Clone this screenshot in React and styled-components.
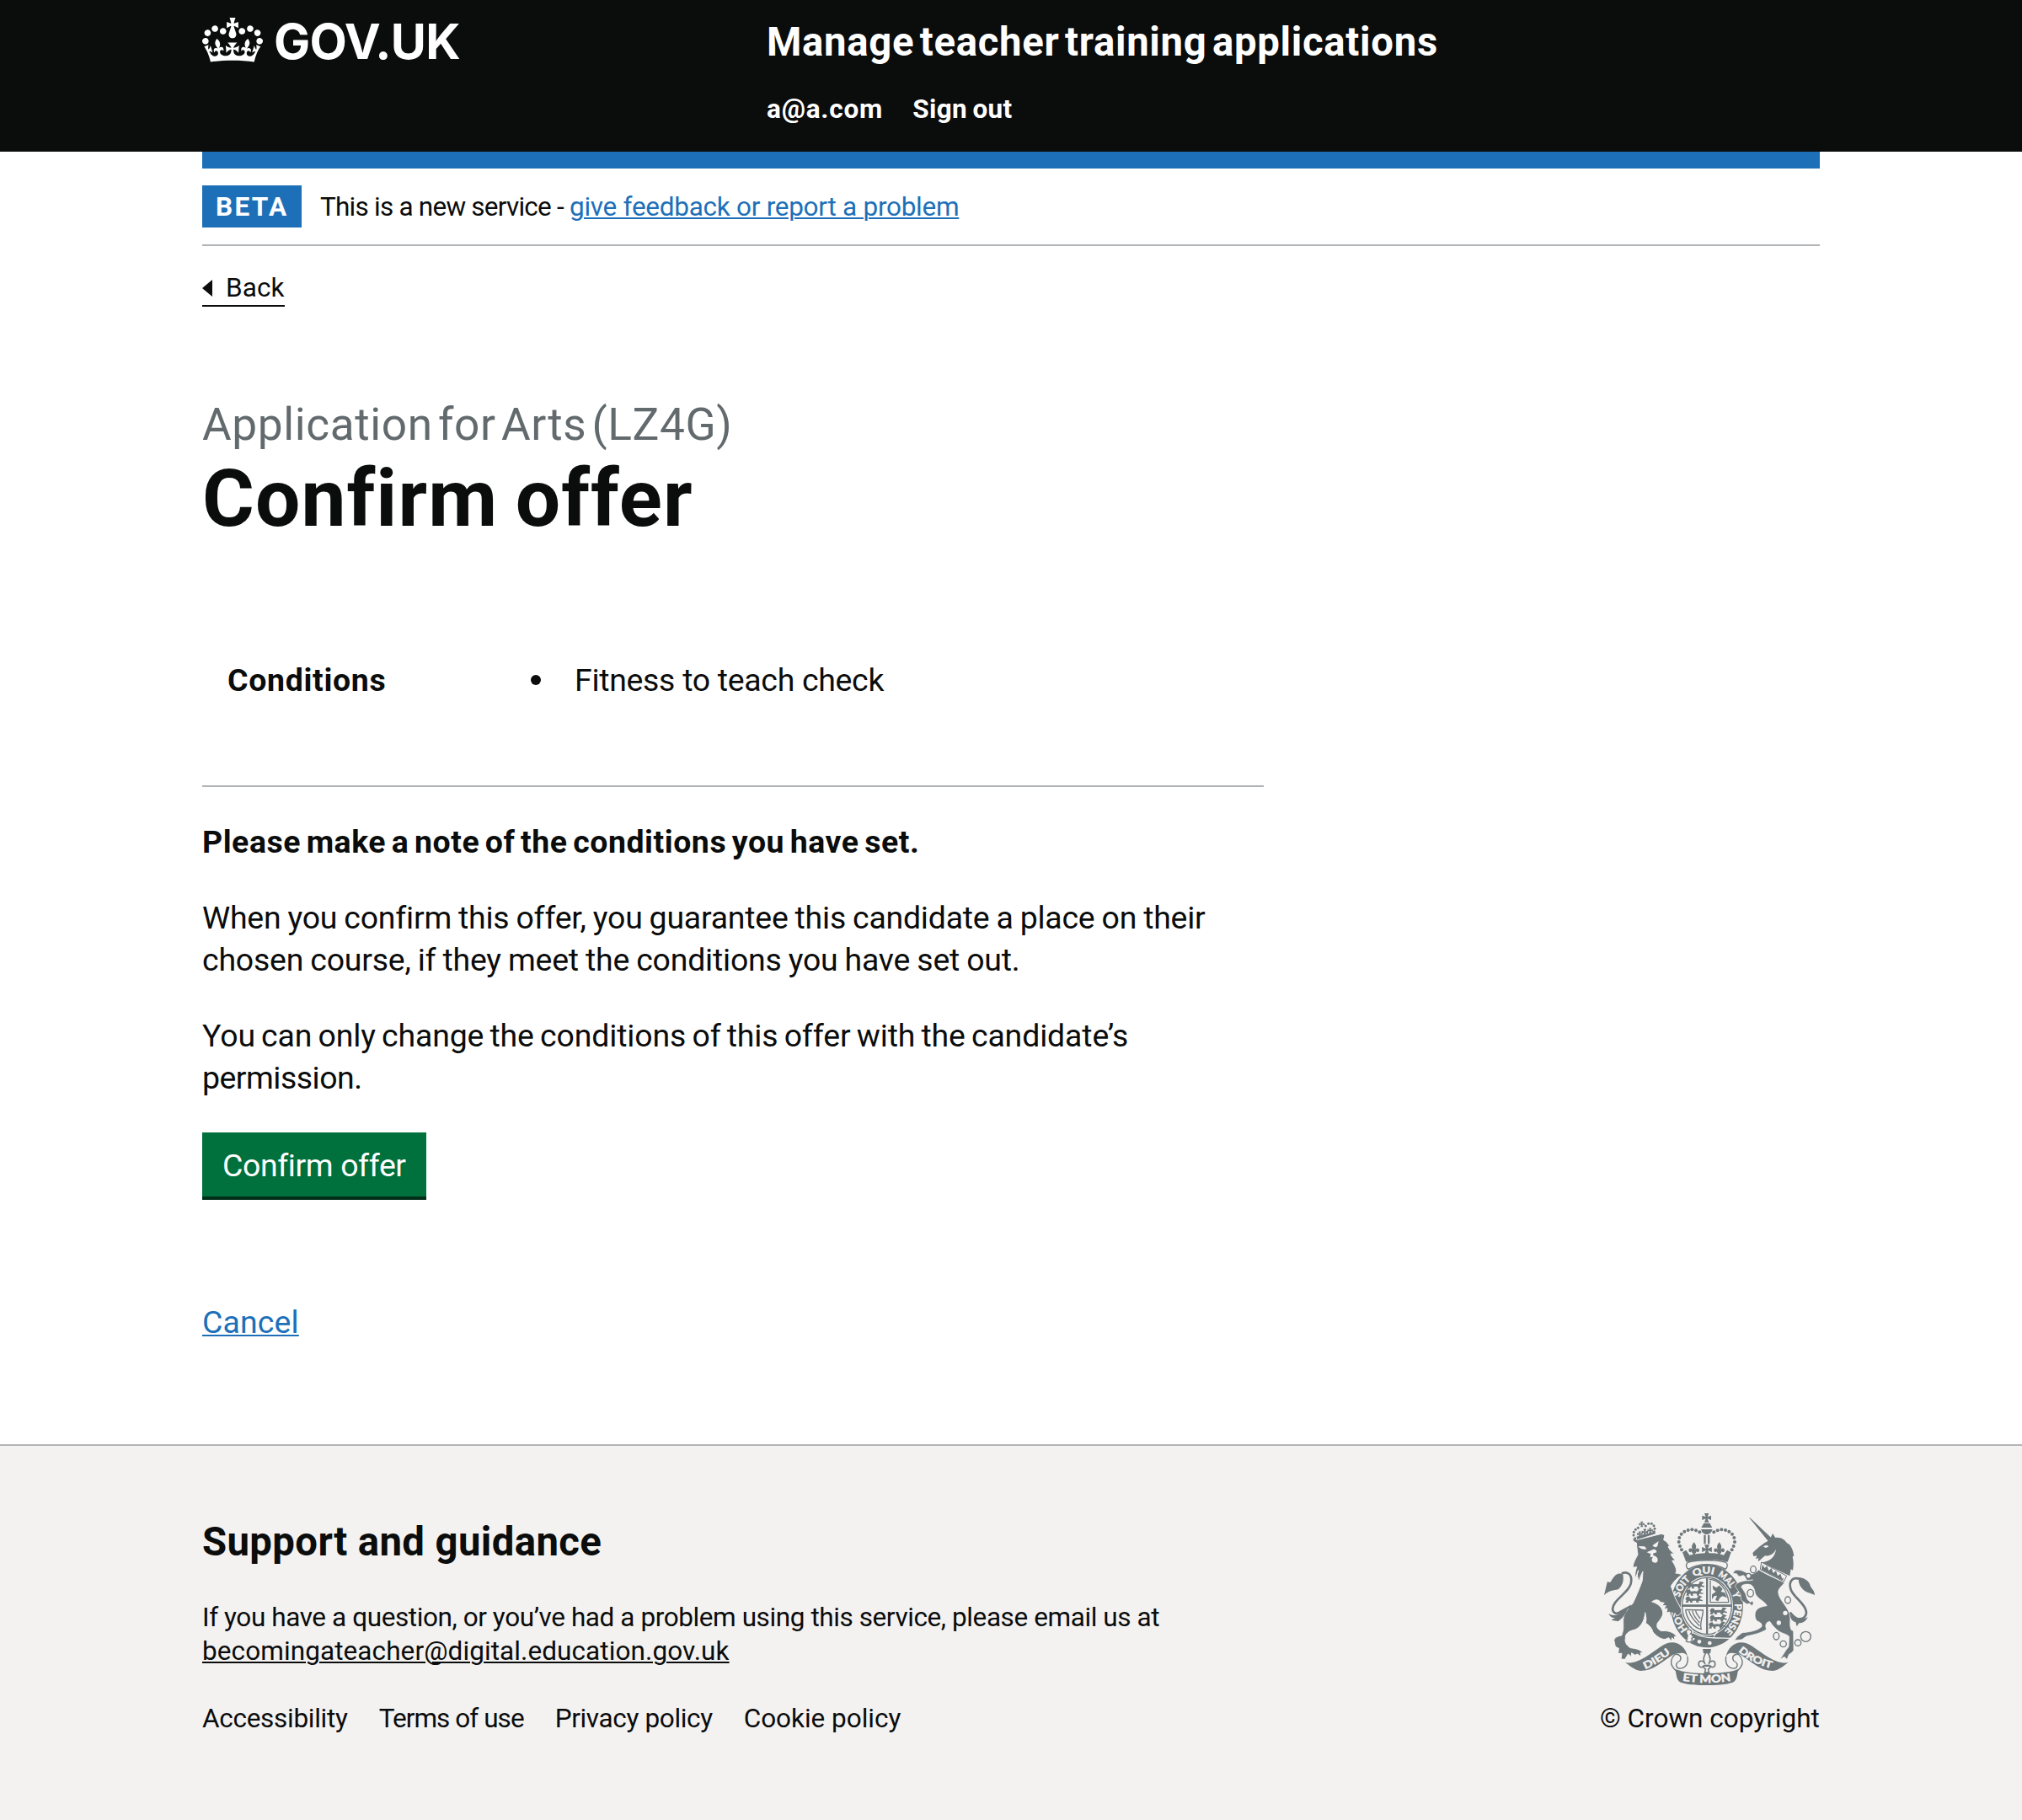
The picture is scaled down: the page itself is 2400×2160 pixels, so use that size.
import React from "react";
import styled, { createGlobalStyle } from "styled-components";

const ink = "#0b0c0c";
const blue = "#1d70b8";
const rule = "#b1b4b6";
const panel = "#f3f2f1";
const crestGrey = "#6e777a";

const GlobalStyle = createGlobalStyle`
  body {
    margin: 0;
    background: #fff;
    color: ${ink};
    font-family: Roboto, "Liberation Sans", sans-serif;
    font-variant-ligatures: none;
  }
`;

const Page = styled.div`
  min-height: 2160px;
  display: flex;
  flex-direction: column;
`;

const Container = styled.div`
  width: 1920px;
  margin: 0 auto;
`;

const Text = styled.span`
  font-size: ${(p) => p.$size || 31.5}px;
  line-height: ${(p) => p.$line || 40}px;
  font-weight: ${(p) => (p.$bold ? 700 : 400)};
  letter-spacing: ${(p) => p.$track || 0}px;
  word-spacing: ${(p) => p.$words || 0}px;
  white-space: nowrap;
`;

const Header = styled.header`
  height: 180px;
  background: ${ink};
  color: #fff;
`;

const HeaderRow = styled(Container)`
  display: grid;
  grid-template-columns: 670px 1fr;
`;

const Logo = styled.a`
  display: flex;
  align-items: flex-start;
  padding-top: 19px;
  color: #fff;
`;

const Crown = styled.svg`
  width: 72px;
  height: 53px;
  margin-top: 2px;
  fill: currentColor;
`;

const LogoText = styled.span`
  margin-left: 13px;
  font: 700 57.6px/60px Inter, "Liberation Sans", sans-serif;
  letter-spacing: -0.8px;
`;

const HeaderContent = styled.div`
  display: flex;
  flex-direction: column;
  padding-top: 25px;
`;

const HeaderNav = styled.nav`
  display: flex;
  gap: 35px;
  margin-top: 35px;
`;

const BlueBar = styled(Container)`
  height: 20px;
  background: ${blue};
`;

const PhaseBanner = styled(Container)`
  display: flex;
  align-items: center;
  box-sizing: border-box;
  height: 92px;
  border-bottom: 2px solid ${rule};
`;

const Tag = styled.strong`
  box-sizing: border-box;
  width: 118px;
  height: 50px;
  padding: 1px 0 0 16px;
  margin-right: 22px;
  background: ${blue};
  color: #fff;
  font-size: 31.5px;
  line-height: 49px;
  letter-spacing: 2.3px;
`;

const PhaseText = styled(Text)`
  padding-top: 2px;
`;

const Link = styled.a`
  color: ${(p) => p.$color || blue};
  text-decoration: underline;
  text-decoration-thickness: 2px;
  text-underline-offset: 2px;
  letter-spacing: ${(p) => p.$track || 0}px;
`;

const BackLink = styled.a`
  display: flex;
  align-items: center;
  gap: 16px;
  box-sizing: border-box;
  width: 98px;
  height: 42px;
  margin-top: 30px;
  border-bottom: 2px solid ${ink};

  &::before {
    content: "";
    border: solid transparent;
    border-width: 10px 12px 10px 0;
    border-right-color: ${ink};
  }
`;

const Main = styled.main`
  width: 1260px;
  padding-top: 110px;
  padding-bottom: 120px;
`;

const Caption = styled.span`
  display: block;
  color: #626a6e;
  font-size: 53.2px;
  line-height: 60px;
  letter-spacing: 0.6px;
  word-spacing: -7.5px;
`;

const Title = styled.h1`
  margin: 8px 0 140px;
  font-size: 94.6px;
  line-height: 100px;
  letter-spacing: 1.05px;
  word-spacing: -4px;
`;

const Summary = styled.dl`
  display: grid;
  grid-template-columns: 360px 1fr;
  margin: 0;
  padding: 0 0 100px 30px;
  border-bottom: 2px solid ${rule};
`;

const Value = styled.dd`
  display: flex;
  align-items: center;
  gap: 40px;
  margin: 0;

  &::before {
    content: "";
    width: 12px;
    height: 12px;
    border-radius: 50%;
    background: ${ink};
  }
`;

const Paragraph = styled.p`
  margin: 40px 0;
  font-size: 37.43px;
  line-height: 50px;
  font-weight: ${(p) => (p.$bold ? 700 : 400)};
`;

const Line = styled.span`
  display: block;
  white-space: nowrap;
  letter-spacing: ${(p) => p.$track}px;
  word-spacing: ${(p) => p.$words || 0}px;
`;

const Button = styled.button`
  display: block;
  width: 266px;
  height: 80px;
  padding: 14px 0 16px 24px;
  margin: 0 0 120px;
  border: 0;
  border-bottom: 4px solid #002d18;
  background: #00703c;
  color: #fff;
  text-align: left;
  font: 400 37.43px/50px Roboto, "Liberation Sans", sans-serif;
  letter-spacing: -0.39px;
`;

const CancelRow = styled.div`
  font-size: 37.43px;
  line-height: 50px;
`;

const Footer = styled.footer`
  flex: 1;
  border-top: 2px solid ${rule};
  background: ${panel};
`;

const FooterRow = styled(Container)`
  display: flex;
  justify-content: space-between;
`;

const FooterInfo = styled.div`
  padding-top: 84px;
`;

const FooterTitle = styled.h2`
  margin: 0 0 40px;
  font-size: 47.3px;
  line-height: 60px;
  letter-spacing: 0.38px;
`;

const FooterText = styled.p`
  margin: 0 0 40px;
  font-size: 31.5px;
  line-height: 40px;
`;

const FooterLinks = styled.nav`
  display: flex;
  gap: 37px;
`;

const Copyright = styled.div`
  display: flex;
  flex-direction: column;
  width: 261px;
  padding-top: 80px;
`;

const CrestArt = styled.svg`
  width: 250px;
  height: 204px;
  margin: 0 0 20px 5px;
`;

const CrownLogo = () => (
  <Crown viewBox="0 0 132 97" aria-hidden="true">
    <path
      fillRule="evenodd"
      d="M25 30.2c3.5 1.5 7.7-.2 9.1-3.7 1.5-3.6-.2-7.8-3.9-9.2-3.6-1.4-7.6.3-9.1 3.9-1.4 3.5.3 7.5 3.9 9zM9 39.5c3.6 1.5 7.8-.2 9.2-3.7 1.5-3.6-.2-7.8-3.9-9.1-3.6-1.5-7.6.2-9.1 3.8-1.4 3.5.3 7.5 3.8 9zM4.4 57.2c3.5 1.5 7.7-.2 9.1-3.8 1.5-3.6-.2-7.7-3.9-9.1-3.5-1.5-7.6.3-9.1 3.8-1.4 3.5.3 7.6 3.9 9.1zm38.3-21.4c3.5 1.5 7.7-.2 9.1-3.8 1.5-3.6-.2-7.7-3.9-9.1-3.6-1.5-7.6.3-9.1 3.8-1.3 3.6.4 7.7 3.9 9.1zm64.4-5.6c-3.6 1.5-7.8-.2-9.1-3.7-1.5-3.6.2-7.8 3.8-9.2 3.6-1.4 7.7.3 9.2 3.9 1.3 3.5-.4 7.5-3.9 9zm15.9 9.3c-3.6 1.5-7.7-.2-9.1-3.7-1.5-3.6.2-7.8 3.7-9.1 3.6-1.5 7.7.2 9.2 3.8 1.5 3.5-.3 7.5-3.8 9zm4.7 17.7c-3.6 1.5-7.8-.2-9.2-3.8-1.5-3.6.2-7.7 3.9-9.1 3.6-1.5 7.7.3 9.2 3.8 1.3 3.5-.4 7.6-3.9 9.1zM89.3 35.8c-3.6 1.5-7.8-.2-9.2-3.8-1.4-3.6.2-7.7 3.9-9.1 3.6-1.5 7.7.3 9.2 3.8 1.4 3.6-.3 7.7-3.9 9.1zM69.7 17.7l8.9 4.7V9.3l-8.9 2.8c-.2-.3-.5-.6-.9-.9L72.4 0H59.6l3.5 11.2c-.3.3-.6.5-.9.9l-8.8-2.8v13.1l8.8-4.7c.3.3.6.7.9.9l-5 15.4v.1c-.2.8-.4 1.6-.4 2.4 0 4.1 3.1 7.5 7 8.1h.2c.3 0 .7.1 1 .1.4 0 .7 0 1-.1h.2c4-.6 7.1-4.1 7.1-8.1 0-.8-.1-1.7-.4-2.4V34l-5.1-15.4c.4-.2.7-.6 1-.9zM66 92.8c16.9 0 32.8 1.1 47.1 3.2 4-16.9 8.9-26.7 14-33.5l-9.6-3.4c1 4.9 1.1 7.2 0 10.2-1.5-1.4-3-4.3-4.2-8.7L108.6 76c2.8-2 5-3.2 7.5-3.3-4.4 9.4-10 11.9-13.6 11.2-4.3-.8-6.3-4.6-5.6-7.9 1-4.7 5.7-5.9 8-.5 4.3-8.7-3-11.4-7.6-8.8 7.1-7.2 7.9-13.5 2.1-21.1-8 6.1-8.1 12.3-4.5 20.8-4.7-5.4-12.1-2.5-9.5 6.2 3.4-5.2 7.9-2 7.2 3.1-.6 4.3-6.4 7.8-13.5 7.2-10.3-.9-10.9-8-11.2-13.8 2.5-.5 7.1 1.8 11 7.3L80.2 60c-4.1 4.4-8 5.3-12.3 5.4 1.4-4.4 8-11.6 8-11.6H55.5s6.4 7.2 7.9 11.6c-4.2-.1-8-1-12.3-5.4l1.4 16.4c3.9-5.5 8.5-7.7 10.9-7.3-.3 5.8-.9 12.8-11.1 13.8-7.2.6-12.9-2.9-13.5-7.2-.7-5 3.8-8.3 7.1-3.1 2.7-8.7-4.6-11.6-9.4-6.2 3.7-8.5 3.6-14.7-4.6-20.8-5.8 7.6-5 13.9 2.2 21.1-4.7-2.6-11.9.1-7.7 8.8 2.3-5.5 7.1-4.2 8.1.5.7 3.3-1.3 7.1-5.7 7.9-3.5.7-9-1.8-13.5-11.2 2.5.1 4.7 1.3 7.5 3.3l-4.7-15.4c-1.2 4.4-2.7 7.2-4.3 8.7-1.1-3-.9-5.3 0-10.2l-9.5 3.4c5 6.9 9.9 16.7 14 33.5 14.8-2.1 30.8-3.2 47.7-3.2z"
    />
  </Crown>
);

const crownDots = [
  [382, 100], [369, 94], [355, 91], [341, 93], [328, 98], [317, 107], [310, 120], [308, 135], [312, 150], [318, 163],
];
const lionCrownDots = [
  [152, 122], [147, 111], [148, 100], [154, 91], [163, 85], [190, 78], [200, 70], [211, 70], [219, 77], [222, 88], [220, 98],
];

const motto = [
  ["honi", "HO", "M340 446A99 115 0 0 1 311 391", 56],
  ["soit", "SOIT", "M311 332A99 115 0 0 1 353 268", 74],
  ["qui", "QUI", "M362 260A99 115 0 0 1 440 254", 73],
  ["mal", "MAL", "M446 257A99 115 0 0 1 498 314", 64],
  ["y", "Y", "M498 318A99 115 0 0 1 506 344", 19],
  ["pense", "PENSE", "M507 355A99 115 0 0 1 464 458", 108],
];

const scrolls = [
  ["dieu", "DIEU", "M188 588Q240 566 285 525", 108, 35],
  ["etmon", "ET MON", "M321 629Q408 643 497 629", 173, 38],
  ["droit", "DROIT", "M519 525Q570 570 640 586", 134, 35],
];

const Fleur = ({ x, y, s = 1 }) => (
  <path
    transform={`translate(${x} ${y}) scale(${s})`}
    d="M0-22C10-10 9-2 4 6C8-2 18-4 19 6C19 14 11 16 8 10C8 16 5 17 3 18L5 26H-5L-3 18C-5 17-8 16-8 10C-11 16-19 14-19 6C-18-4-8-2-4 6C-9-2-10-10 0-22Z"
  />
);

const Cross = ({ x, y, s = 1 }) => (
  <path
    transform={`translate(${x} ${y}) scale(${s})`}
    d="M-8-16H8L3-3L16-8V8L3 3L8 16H-8L-3 3L-16 8V-8L-3-3Z"
  />
);

const Passant = ({ x, y }) => (
  <path
    transform={`translate(${x} ${y})`}
    d="M-31 11L-28 3L-32-2L-27-10L-18-11L-14-4L0-5L8-4L14-11L11-14L22-13L29-9L22-6L20-1L30 2L29 6L18 4L14 8L18 11L8 11L6 4L-5 4L-8 8L-4 11L-14 11L-16 4L-22 7L-20 11Z"
  />
);

const RibbonSide = () => (
  <g>
    <path d="M118 565C134 566 148 564 158 560C200 545 236 508 266 496C300 485 332 505 340 546C336 534 326 529 313 531C300 531 290 534 282 540C240 568 215 594 172 594C150 592 135 577 118 565Z" />
    <path
      fill="none"
      stroke={crestGrey}
      strokeWidth="4"
      d="M339 543C344 575 325 590 304 584C294 574 299 564 312 558C320 545 312 535 296 534C282 545 276 565 285 578C290 588 296 590 300 597"
    />
    <path d="M296 588C300 622 304 632 318 636C345 645 375 645 408 645V603C370 603 325 600 296 588Z" />
  </g>
);

const Crest = () => (
  <CrestArt viewBox="42 33 750 612" fill={crestGrey} aria-label="Royal coat of arms">
    <defs>
      {[...motto, ...scrolls].map(([id, , d]) => (
        <path key={id} id={`crest-${id}`} d={d} />
      ))}
    </defs>

    {/* garter and shield */}
    <ellipse cx="408" cy="363" rx="129" ry="148" />
    <ellipse cx="408" cy="363" rx="93" ry="106" fill={panel} />
    <ellipse cx="408" cy="363" rx="88" ry="101" fill="none" stroke={crestGrey} strokeWidth="4" />
    <path d="M405 262H412V464H405ZM320 358H496V366H320Z" />
    <Passant x={369} y={290} />
    <Passant x={365} y={315} />
    <Passant x={363} y={340} />
    <Passant x={450} y={382} />
    <Passant x={450} y={407} />
    <Passant x={446} y={432} />
    <path
      fill="none"
      stroke={crestGrey}
      strokeWidth="4"
      d="M420 272V350H486M416 268C455 270 480 305 486 350M332 376L394 378C396 400 380 420 388 446C360 440 336 410 332 376M344 380C350 405 368 420 382 434M356 380C360 400 372 412 382 422M368 380C370 392 378 400 385 408"
    />
    <path d="M428 290L442 298L452 290L464 302L458 312L472 316L480 334L464 328L454 334L448 346L438 342L444 326L434 328L426 340L426 322L440 312L430 304Z" />
    <path fill={panel} d="M330 448L350 440L362 456L352 468L366 480L348 494L332 486L342 470Z" />
    <path
      fill="none"
      stroke={crestGrey}
      strokeWidth="4"
      d="M334 452C345 440 360 452 350 462C362 462 366 474 354 478C360 488 344 496 334 488C342 480 336 466 334 452Z"
    />
    <path fill="none" stroke={panel} strokeWidth="4" d="M360 459C400 482 450 476 496 478M432 472L446 452" />
    <circle cx="381" cy="490" r="7" fill={panel} />
    <circle cx="418" cy="495" r="7" fill={panel} />
    <g fill={panel} stroke={panel} strokeWidth="1.5" fontFamily="Lato, sans-serif" fontWeight="700" fontSize="34">
      {motto.map(([id, word, , len]) => (
        <text key={id}>
          <textPath href={`#crest-${id}`} textLength={len} lengthAdjust="spacingAndGlyphs">{word}</textPath>
        </text>
      ))}
    </g>

    {/* royal crown */}
    <Cross x={407} y={49} />
    <path d="M397 68H418L427 84H388ZM387 90H428C424 104 414 108 407 108C400 108 391 104 387 90ZM397 110H404V142H397ZM411 110H418V142H411Z" />
    {crownDots.map(([x, y]) => (
      <g key={x}>
        <circle cx={x} cy={y} r="6" />
        <circle cx={815 - x} cy={y} r="6" />
      </g>
    ))}
    <Fleur x={362} y={158} s={1} />
    <Fleur x={452} y={158} s={1} />
    <Cross x={408} y={162} s={1.1} />
    <path d="M321 172L334 164L346 182C380 172 435 172 468 182L480 164L494 172L482 206C440 196 376 196 334 206Z" />
    <path
      fill={panel}
      stroke={crestGrey}
      strokeWidth="4"
      d="M342 207C380 198 435 198 474 207C484 212 482 226 474 232C435 209 380 209 342 232C332 226 332 212 342 207Z"
    />

    {/* lion */}
    <path
      stroke={panel}
      strokeWidth="3"
      d="M143 122L161 127L246 106L258 110L254 128C266 132 268 142 277 150L270 151C276 166 284 172 293 176L279 178C285 190 290 196 297 200L284 202C291 214 298 222 300 240L296 246C305 246 313 249 319 252C302 262 290 276 280 292L292 326C299 345 308 355 318 378C317 388 313 394 300 399L294 388L291 403L284 386L276 402L276 384L264 388L267 372L254 374L262 362L248 362L256 352L244 350C236 340 226 338 212 348C225 352 244 360 250 380C256 398 240 412 232 424C226 440 236 448 246 452C260 450 290 452 301 474L292 472L294 486L284 476L281 488L272 476L258 482C240 480 226 468 216 456C212 440 200 430 190 424C194 410 190 398 188 386C186 420 170 440 150 448C130 452 116 462 118 478C114 492 124 506 136 512C150 514 170 516 181 530L171 530L174 543L160 534L152 538L140 530L138 544L128 534L116 553L102 552L105 532L92 532L94 514L82 508L77 484C84 470 96 470 104 468C116 440 106 420 112 400C120 376 140 362 146 350C160 320 172 290 178 272L180 240C174 252 168 262 168 274C160 262 158 250 164 236L154 264C150 248 154 236 158 224L144 226C146 206 156 192 162 180C160 168 158 150 157 138C150 136 144 132 143 122Z"
    />
    <path fill={panel} d="M164 150L186 151L194 160C182 164 170 160 164 150ZM214 148L236 132L232 150C226 156 220 154 214 148ZM194 172C202 166 210 166 216 162C222 160 230 164 229 172L216 176L218 184C232 184 240 206 226 209C212 210 208 198 216 188L206 190L208 178Z" />
    {lionCrownDots.map(([x, y]) => (
      <circle key={`${x}-${y}`} cx={x} cy={y} r="4.5" />
    ))}
    <Cross x={176} y={72} s={0.6} />
    <Cross x={187} y={100} s={0.7} />
    <Cross x={169} y={107} s={0.6} />
    <Cross x={206} y={94} s={0.6} />
    <path d="M157 116L222 98L225 106L160 126Z" />
    <path d="M42 325C48 300 52 282 54 276C58 276 60 282 66 276C74 262 80 252 92 248C104 246 112 250 110 258C112 280 104 292 94 302C84 308 58 305 42 325Z" />
    <path fill="none" stroke={crestGrey} strokeWidth="8" d="M104 248C128 236 144 254 137 284C128 318 74 340 72 374C74 392 88 392 100 384L140 362" />
    <path d="M126 372C118 396 104 408 92 418C84 414 76 418 68 412L82 406C70 406 62 400 58 390C72 400 92 398 106 380Z" />

    {/* unicorn */}
    <path d="M558 48L563 50L637 120L626 132Z" />
    <path d="M571 175C584 158 604 146 614 138L626 131L636 118L642 105L652 120C668 116 686 126 692 138C706 144 714 160 718 184L713 188C718 206 716 222 714 236L707 232L703 256C670 240 630 222 604 208C630 206 652 190 654 160C648 176 632 188 616 184C606 190 598 202 590 204L592 192L582 196L586 184L574 186Z" />
    <path fill={panel} d="M608 150L622 146L628 152L616 156Z" />
    <path fill={panel} stroke={crestGrey} strokeWidth="3" d="M602 207L692 256L682 276L598 233Z" />
    <path d="M606 216L614 228L622 220L628 238L638 228L644 246L654 238L660 256L670 248L676 266L682 262L678 272L602 234Z" />
    <path
      stroke={panel}
      strokeWidth="2"
      d="M592 234C610 246 650 264 684 280C676 292 662 300 662 314C664 340 692 360 702 390C708 412 700 430 708 448L716 452L717 520C712 530 704 532 700 536L693 553L684 544L668 553L681 534C686 524 694 516 699 508L701 472C690 460 672 462 656 446C644 436 636 424 632 418C618 420 614 432 620 446C600 460 570 466 550 470L538 478C534 486 516 482 506 486L516 472L534 458C560 456 584 452 602 438C606 430 602 424 594 420C580 416 578 400 580 388C584 370 600 366 622 362C612 344 590 340 580 318C578 300 570 288 560 286C545 284 536 286 530 294L545 318L552 340L564 350L570 344L574 354L568 362L560 354L550 356L530 342L528 322L508 292C514 276 545 272 572 270L556 273C545 272 550 260 538 254L522 258L514 248L500 247L508 236C530 230 545 245 562 250C575 250 588 240 592 234Z"
    />
    <g fill="none" stroke={crestGrey} strokeWidth="4">
      <ellipse cx="573" cy="233" rx="10" ry="12" />
      <circle cx="556" cy="256" r="9" fill={panel} />
      <ellipse cx="563" cy="317" rx="11" ry="13" fill={panel} />
      <ellipse cx="696" cy="342" rx="10" ry="12" fill={panel} />
      <ellipse cx="655" cy="470" rx="10" ry="13" />
      <circle cx="680" cy="498" r="11" />
      <circle cx="732" cy="494" r="11" />
      <circle cx="760" cy="472" r="18" />
    </g>
    <circle cx="687" cy="388" r="8" fill={panel} />
    <circle cx="664" cy="423" r="8" fill={panel} />
    <path d="M792 325C780 316 766 318 752 306C738 294 732 276 736 262C750 262 766 270 774 284C778 302 792 305 792 325Z" />
    <path fill="none" stroke={crestGrey} strokeWidth="8" d="M740 268C716 258 698 272 706 302C714 332 758 352 762 384C762 404 746 412 730 408C718 404 710 394 704 386" />
    <path d="M704 392C716 404 748 416 768 402C760 418 748 424 736 424L728 436L724 420C712 418 704 406 704 392Z" />

    {/* fleur-de-lis below the garter */}
    <path d="M393 516H423L420 532H396Z" />
    <g fill={panel} stroke={crestGrey} strokeWidth="3">
      <Fleur x={408} y={560} s={1.55} />
    </g>
    <path d="M397 572H419V579H397Z" />

    {/* motto scroll */}
    <RibbonSide />
    <g transform="translate(815 0) scale(-1 1)">
      <RibbonSide />
    </g>
    <g fill={panel} stroke={panel} strokeWidth="1.5" fontFamily="Lato, sans-serif" fontWeight="700">
      {scrolls.map(([id, word, , len, size]) => (
        <text key={id} fontSize={size}>
          <textPath href={`#crest-${id}`} textLength={len} lengthAdjust="spacingAndGlyphs">{word}</textPath>
        </text>
      ))}
    </g>
  </CrestArt>
);

export default function App() {
  return (
    <Page>
      <GlobalStyle />
      <Header>
        <HeaderRow>
          <Logo>
            <CrownLogo />
            <LogoText>GOV.UK</LogoText>
          </Logo>
          <HeaderContent>
            <Text $size={47.3} $line={50} $track={0.7} $words={-6} $bold>Manage teacher training applications</Text>
            <HeaderNav>
              <Text $track={0.8} $bold>a@a.com</Text>
              <Text $track={0.4} $words={-2} $bold>Sign out</Text>
            </HeaderNav>
          </HeaderContent>
        </HeaderRow>
      </Header>
      <BlueBar />
      <PhaseBanner>
        <Tag>BETA</Tag>
        <PhaseText $track={-0.77}>
          This is a new service - <Link $track={-0.27}>give feedback or report a problem</Link>
        </PhaseText>
      </PhaseBanner>
      <Container>
        <BackLink>
          <Text $track={0.1}>Back</Text>
        </BackLink>
        <Main>
          <Caption>Application for Arts (LZ4G)</Caption>
          <Title>Confirm offer</Title>
          <Summary>
            <Text as="dt" $size={37.43} $line={50} $track={0.7} $bold>Conditions</Text>
            <Value>
              <Text $size={37.43} $line={50} $track={-0.29}>Fitness to teach check</Text>
            </Value>
          </Summary>
          <Paragraph $bold>
            <Line $track={0.55} $words={-3.2}>Please make a note of the conditions you have set.</Line>
          </Paragraph>
          <Paragraph>
            <Line $track={-0.22} $words={-1}>When you confirm this offer, you guarantee this candidate a place on their</Line>
            <Line $track={-0.2} $words={-1}>chosen course, if they meet the conditions you have set out.</Line>
          </Paragraph>
          <Paragraph>
            <Line $track={-0.12} $words={-2}>You can only change the conditions of this offer with the candidate’s</Line>
            <Line $track={-0.5}>permission.</Line>
          </Paragraph>
          <Button>Confirm offer</Button>
          <CancelRow>
            <Link $track={0.15}>Cancel</Link>
          </CancelRow>
        </Main>
      </Container>
      <Footer>
        <FooterRow>
          <FooterInfo>
            <FooterTitle>Support and guidance</FooterTitle>
            <FooterText>
              <Line $track={-0.41}>If you have a question, or you’ve had a problem using this service, please email us at</Line>
              <Link $color={ink} $track={0.09}>becomingateacher@digital.education.gov.uk</Link>
            </FooterText>
            <FooterLinks>
              <Text $track={-0.28}>Accessibility</Text>
              <Text $track={-0.95}>Terms of use</Text>
              <Text $track={-0.35}>Privacy policy</Text>
              <Text $track={-0.03}>Cookie policy</Text>
            </FooterLinks>
          </FooterInfo>
          <Copyright>
            <Crest />
            <Text>© Crown copyright</Text>
          </Copyright>
        </FooterRow>
      </Footer>
    </Page>
  );
}
